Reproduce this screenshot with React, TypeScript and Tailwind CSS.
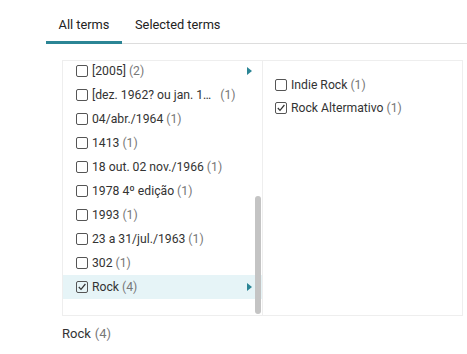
import React from "react";

type Term = { label: string; count: number; checked?: boolean; children?: boolean; active?: boolean; gap?: boolean };

const terms: Term[] = [
    { label: "[2005]", count: 2, children: true },
    { label: "[dez. 1962? ou jan. 1…", count: 1, gap: true },
    { label: "04/abr./1964", count: 1 },
    { label: "1413", count: 1 },
    { label: "18 out. 02 nov./1966", count: 1 },
    { label: "1978 4º edição", count: 1 },
    { label: "1993", count: 1 },
    { label: "23 a 31/jul./1963", count: 1 },
    { label: "302", count: 1 },
    { label: "Rock", count: 4, checked: true, children: true, active: true },
];

const subTerms: Term[] = [
    { label: "Indie Rock", count: 1 },
    { label: "Rock Altermativo", count: 1, checked: true },
];

function Box({ checked }: { checked?: boolean }) {
    return (
        <span className="flex h-[12px] w-[12px] shrink-0 items-center justify-center rounded-[2px] border border-[#555]">
            {checked && (
                <svg width="10" height="10" viewBox="0 0 10 10" fill="none">
                    <path d="M1.8 5 L4 7.3 L8.4 2" stroke="#333" strokeWidth="1.2" />
                </svg>
            )}
        </span>
    );
}

function Row({ term }: { term: Term }) {
    return (
        <div
            className={`flex h-6 items-center pl-[13px] pr-[10px] ${term.active ? "bg-[#e6f4f7]" : ""}`}
        >
            <Box checked={term.checked} />
            <span className="ml-[4px] whitespace-nowrap text-[#333]">{term.label}</span>
            <span className={`${term.gap ? "ml-[9px]" : "ml-[3px]"} text-[#777]`}>({term.count})</span>
            {term.children && (
                <span className="ml-auto h-0 w-0 border-y-[4px] border-l-[5px] border-y-transparent border-l-[#2b8595]" />
            )}
        </div>
    );
}

export default function App() {
    return (
        <div className="h-[354px] w-[467px] overflow-hidden bg-white text-[13px] leading-4 font-['Roboto',sans-serif]">
            <div className="ml-[46px] flex border-b border-[#ddd]">
                <div className="-mb-px h-[44px] w-[76px] border-b-[3px] border-[#2b8595] pt-[17px] text-center text-[12.8px] text-[#222]">
                    All terms
                </div>
                <div className="h-[43px] px-[13px] pt-[17px] text-[12.8px] text-[#222]">Selected terms</div>
            </div>

            <div className="ml-[62px] mt-4 flex h-[256px] w-[401px] border border-[#eee] text-[12.2px]">
                <div className="relative w-[200px] overflow-hidden border-r border-[#eee]">
                    <div className="-mt-[2px]">
                        {terms.map((t) => (
                            <Row key={t.label} term={t} />
                        ))}
                    </div>
                    <div className="absolute right-[1px] top-[135px] h-[118px] w-[6px] rounded-full bg-[#c4c4c4]" />
                </div>
                <div className="flex-1 pt-3">
                    {subTerms.map((t) => (
                        <div key={t.label} className="flex h-[23px] items-center pl-3">
                            <Box checked={t.checked} />
                            <span className="ml-[4px] text-[#333]">{t.label}</span>
                            <span className="ml-[3px] text-[#777]">({t.count})</span>
                        </div>
                    ))}
                </div>
            </div>

            <div className="ml-[62px] mt-[9px] leading-[17px]">
                <span className="text-[#333]">Rock</span>
                <span className="ml-[4px] text-[#777]">(4)</span>
            </div>
        </div>
    );
}
